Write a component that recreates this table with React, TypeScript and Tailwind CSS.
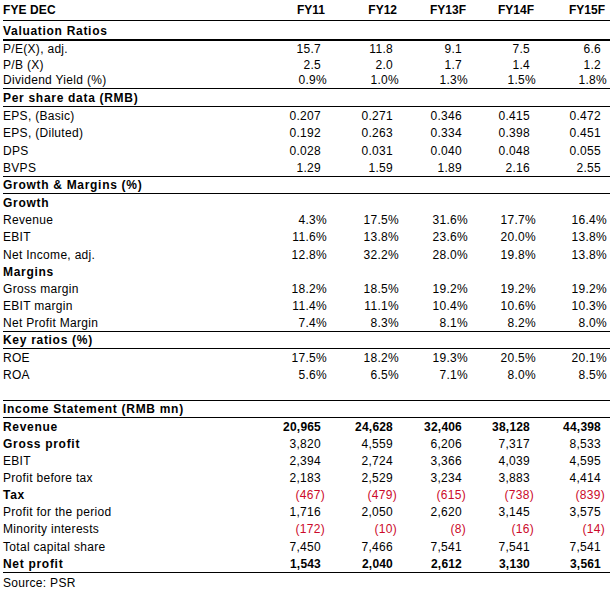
import React from 'react'

type Row = {
  label: string
  values?: string[]
  h: 16 | 17 | 18 | 20
  border?: 1 | 2
  labelBold?: boolean
  valueBold?: boolean
}

const heights = { 16: 'h-[16px]', 17: 'h-[17px]', 18: 'h-[18px]', 20: 'h-[20px]' }
const colWidths = ['w-[70px]', 'w-[72px]', 'w-[69px]', 'w-[68px]', 'w-[71px]']
const years = ['FY11', 'FY12', 'FY13F', 'FY14F', 'FY15F']

const rows: Row[] = [
  { label: 'Valuation Ratios', h: 20, border: 2, labelBold: true },
  { label: 'P/E(X), adj.', h: 16, values: ['15.7', '11.8', '9.1', '7.5', '6.6'] },
  { label: 'P/B (X)', h: 16, values: ['2.5', '2.0', '1.7', '1.4', '1.2'] },
  { label: 'Dividend Yield (%)', h: 16, border: 1, values: ['0.9%', '1.0%', '1.3%', '1.5%', '1.8%'] },
  { label: 'Per share data (RMB)', h: 18, border: 1, labelBold: true },
  { label: 'EPS, (Basic)', h: 17, values: ['0.207', '0.271', '0.346', '0.415', '0.472'] },
  { label: 'EPS, (Diluted)', h: 17, values: ['0.192', '0.263', '0.334', '0.398', '0.451'] },
  { label: 'DPS', h: 18, values: ['0.028', '0.031', '0.040', '0.048', '0.055'] },
  { label: 'BVPS', h: 18, border: 1, values: ['1.29', '1.59', '1.89', '2.16', '2.55'] },
  { label: 'Growth & Margins (%)', h: 17, border: 1, labelBold: true },
  { label: 'Growth', h: 17, labelBold: true },
  { label: 'Revenue', h: 17, values: ['4.3%', '17.5%', '31.6%', '17.7%', '16.4%'] },
  { label: 'EBIT', h: 17, values: ['11.6%', '13.8%', '23.6%', '20.0%', '13.8%'] },
  { label: 'Net Income, adj.', h: 18, values: ['12.8%', '32.2%', '28.0%', '19.8%', '13.8%'] },
  { label: 'Margins', h: 17, labelBold: true },
  { label: 'Gross margin', h: 17, values: ['18.2%', '18.5%', '19.2%', '19.2%', '19.2%'] },
  { label: 'EBIT margin', h: 17, values: ['11.4%', '11.1%', '10.4%', '10.6%', '10.3%'] },
  { label: 'Net Profit Margin', h: 18, border: 1, values: ['7.4%', '8.3%', '8.1%', '8.2%', '8.0%'] },
  { label: 'Key ratios (%)', h: 17, border: 1, labelBold: true },
  { label: 'ROE', h: 17, values: ['17.5%', '18.2%', '19.3%', '20.5%', '20.1%'] },
  { label: 'ROA', h: 17, values: ['5.6%', '6.5%', '7.1%', '8.0%', '8.5%'] },
  { label: '', h: 18, border: 1 },
  { label: 'Income Statement (RMB mn)', h: 17, border: 1, labelBold: true },
  { label: 'Revenue', h: 17, labelBold: true, valueBold: true, values: ['20,965', '24,628', '32,406', '38,128', '44,398'] },
  { label: 'Gross profit', h: 17, labelBold: true, values: ['3,820', '4,559', '6,206', '7,317', '8,533'] },
  { label: 'EBIT', h: 17, values: ['2,394', '2,724', '3,366', '4,039', '4,595'] },
  { label: 'Profit before tax', h: 17, values: ['2,183', '2,529', '3,234', '3,883', '4,414'] },
  { label: 'Tax', h: 17, labelBold: true, values: ['(467)', '(479)', '(615)', '(738)', '(839)'] },
  { label: 'Profit for the period', h: 17, values: ['1,716', '2,050', '2,620', '3,145', '3,575'] },
  { label: 'Minority interests', h: 17, values: ['(172)', '(10)', '(8)', '(16)', '(14)'] },
  { label: 'Total capital share', h: 18, values: ['7,450', '7,466', '7,541', '7,541', '7,541'] },
  { label: 'Net profit', h: 18, border: 1, labelBold: true, valueBold: true, values: ['1,543', '2,040', '2,612', '3,130', '3,561'] },
]

function Value({ text, bold, width }: { text: string; bold?: boolean; width: string }) {
  const neg = text.startsWith('(')
  const pct = text.endsWith('%')
  return (
    <div
      className={`${width} text-right ${neg ? 'pr-[2px] text-[#cc0a2a]' : pct ? 'pr-0' : 'pr-[6px]'} ${
        bold ? 'font-bold tracking-[0.2px]' : 'tracking-[0.3px]'
      }`}
    >
      {text}
    </div>
  )
}

export default function App() {
  return (
    <div className="w-[615px] h-[591px] bg-white text-black font-['Liberation_Sans',Arial,sans-serif] text-[12px] leading-[14px] overflow-hidden">
      <div className="ml-[3px] w-[607px]">
        {/* header */}
        <div className="flex items-end h-[21px] pb-[3px] border-b border-black font-bold">
          <div className="w-[254px] tracking-[0.1px]">FYE DEC</div>
          {years.map((y, i) => (
            <div key={y} className={`${colWidths[i]} text-right pr-[2px]`}>
              {y}
            </div>
          ))}
        </div>

        {rows.map((r, idx) => (
          <div
            key={idx}
            className={`flex items-end pb-[1px] ${heights[r.h]} ${
              r.border === 2 ? 'border-b-2 border-black' : r.border === 1 ? 'border-b border-black' : ''
            }`}
          >
            <div
              className={`w-[254px] whitespace-nowrap ${
                r.labelBold ? 'font-bold tracking-[0.7px]' : 'tracking-[0.3px]'
              }`}
            >
              {r.label}
            </div>
            {r.values?.map((v, i) => (
              <Value key={i} text={v} bold={r.valueBold} width={colWidths[i]} />
            ))}
          </div>
        ))}

        <div className="h-[18px] flex items-end pb-[1px] tracking-[0.3px]">Source: PSR</div>
      </div>
    </div>
  )
}
